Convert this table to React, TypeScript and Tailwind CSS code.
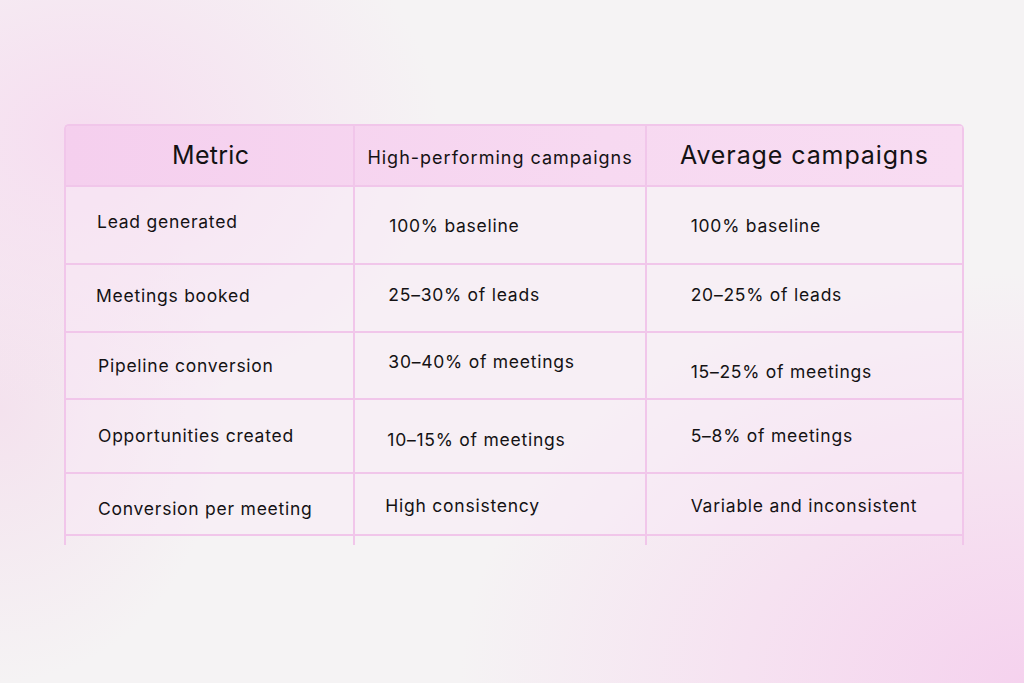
import React from 'react';

type Cell = { text: string; pos: string };

const rows: { h: string; cells: Cell[] }[] = [
  {
    h: 'h-[78px]',
    cells: [
      { text: 'Lead generated', pos: 'pt-[23px] pl-[31px]' },
      { text: '100% baseline', pos: 'pt-[27px] pl-[34px]' },
      { text: '100% baseline', pos: 'pt-[27px] pl-[44px]' },
    ],
  },
  {
    h: 'h-[68px]',
    cells: [
      { text: 'Meetings booked', pos: 'pt-[19px] pl-[30px]' },
      { text: '25–30% of leads', pos: 'pt-[18px] pl-[33px]' },
      { text: '20–25% of leads', pos: 'pt-[18px] pl-[44px]' },
    ],
  },
  {
    h: 'h-[67px]',
    cells: [
      { text: 'Pipeline conversion', pos: 'pt-[21px] pl-[32px]' },
      { text: '30–40% of meetings', pos: 'pt-[17px] pl-[33px]' },
      { text: '15–25% of meetings', pos: 'pt-[27px] pl-[44px]' },
    ],
  },
  {
    h: 'h-[74px]',
    cells: [
      { text: 'Opportunities created', pos: 'pt-[24px] pl-[32px]' },
      { text: '10–15% of meetings', pos: 'pt-[28px] pl-[32px]' },
      { text: '5–8% of meetings', pos: 'pt-[24px] pl-[44px]' },
    ],
  },
  {
    h: 'h-[62px]',
    cells: [
      { text: 'Conversion per meeting', pos: 'pt-[23px] pl-[32px]' },
      { text: 'High consistency', pos: 'pt-[20px] pl-[30px]' },
      { text: 'Variable and inconsistent', pos: 'pt-[20px] pl-[44px]' },
    ],
  },
];

const cols = ['w-[290px]', 'w-[292px]', 'w-[318px]'];

const App = () => {
  return (
    <div
      className="w-full h-[683px] overflow-hidden bg-[#f5f3f4] bg-[radial-gradient(ellipse_55%_60%_at_100%_100%,#f5d2ee_0%,#f6e2f1_50%,transparent_100%),radial-gradient(ellipse_35%_40%_at_8%_20%,#f6ddf0_0%,transparent_100%),radial-gradient(ellipse_22%_40%_at_0%_60%,#f4e2ee_0%,transparent_100%)] pt-[124px] pl-[64px] text-[#141214]"
      style={{ fontFamily: 'Inter, "Noto Sans", sans-serif' }}
    >
      <div className="w-[900px] border-l-2 border-t-2 border-[#f1c6ea] rounded-tl-[5px] rounded-tr-[5px] overflow-hidden">
        {/* Header */}
        <div className="flex h-[61px] bg-[linear-gradient(90deg,#f5cfee_0%,#f7d9f1_60%,#f8dcf2_100%)]">
          <div className={`${cols[0]} border-r-2 border-b-2 border-[#f1c6ea] flex items-center justify-center pl-[2px] text-[25px] tracking-[0.3px]`}>
            Metric
          </div>
          <div className={`${cols[1]} border-r-2 border-b-2 border-[#f1c6ea] flex items-center justify-center pt-[4px] text-[18px] tracking-[1px]`}>
            High-performing campaigns
          </div>
          <div className={`${cols[2]} border-r-2 border-b-2 border-[#f1c6ea] flex items-center justify-center text-[25px] tracking-[0.9px]`}>
            Average campaigns
          </div>
        </div>

        {/* Body */}
        {rows.map((row, i) => (
          <div key={i} className={`flex ${row.h} bg-[#fbe9f7]/40`}>
            {row.cells.map((c, j) => (
              <div
                key={j}
                className={`${cols[j]} ${c.pos} border-r-2 border-b-2 border-[#f1c6ea] text-[17.5px] leading-[24px] tracking-[0.75px]`}
              >
                {c.text}
              </div>
            ))}
          </div>
        ))}

        {/* cut-off tail */}
        <div className="flex h-[9px]">
          {cols.map((w, j) => (
            <div key={j} className={`${w} border-r-2 border-[#f1c6ea]`} />
          ))}
        </div>
      </div>
    </div>
  );
};

export default App;
